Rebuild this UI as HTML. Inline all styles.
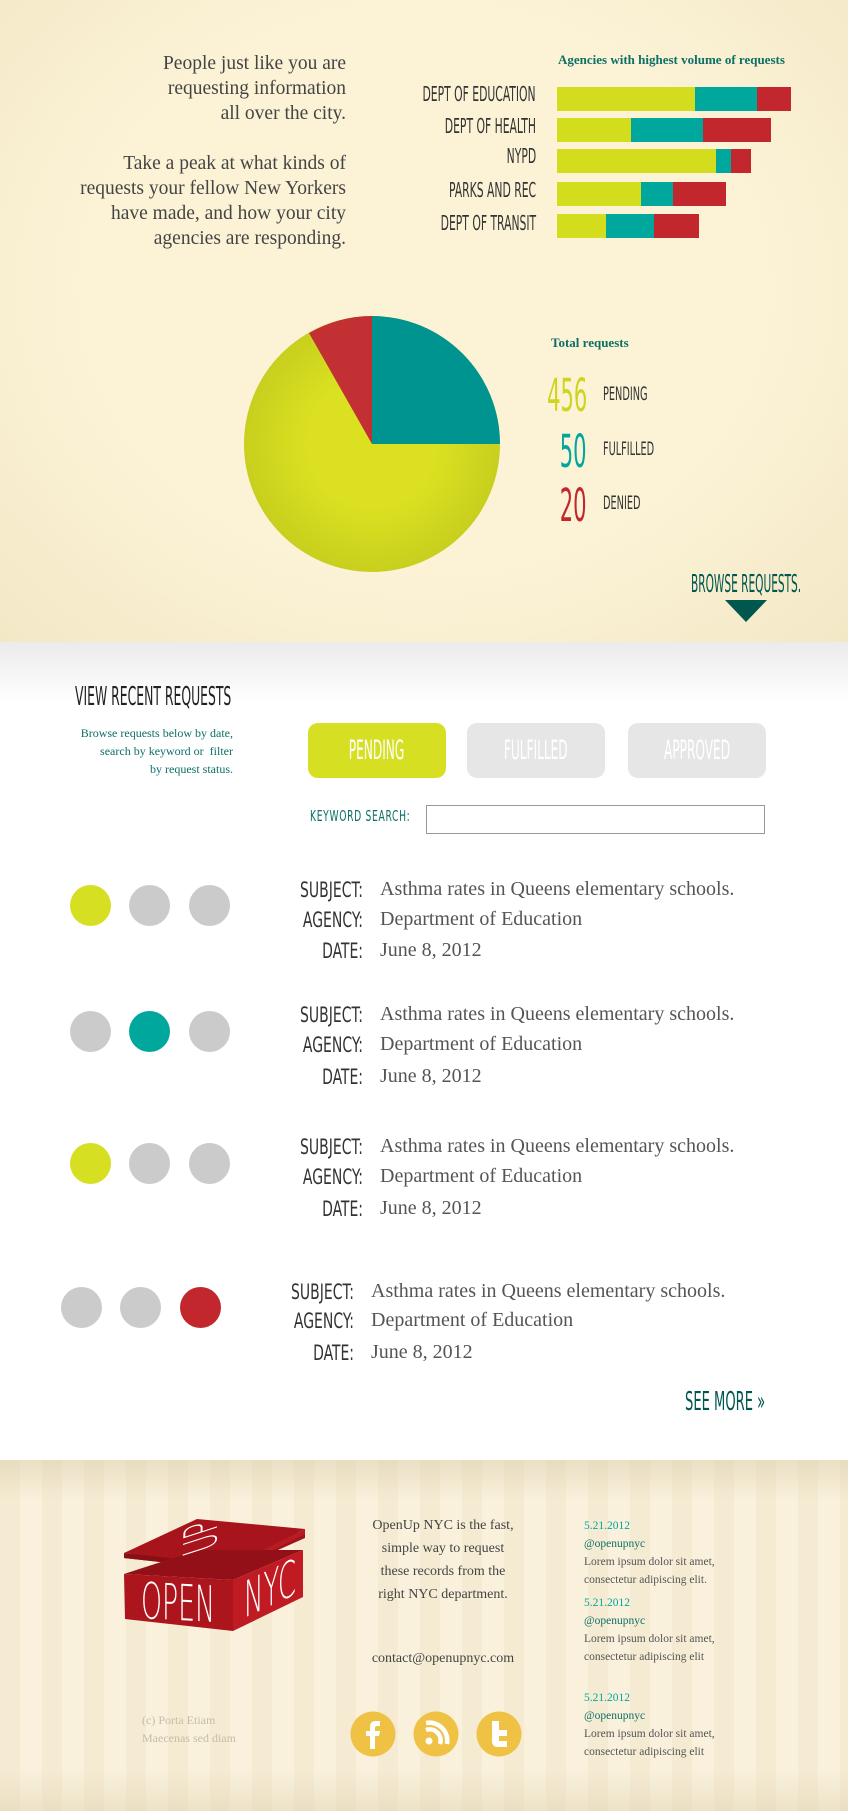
<!DOCTYPE html>
<html><head><meta charset="utf-8"><style>
*{margin:0;padding:0;box-sizing:border-box}
body{width:848px;height:1811px;position:relative;overflow:hidden;background:#fff;font-family:"Liberation Serif",serif}
.a{position:absolute;white-space:nowrap}
.top{position:absolute;left:0;top:0;width:848px;height:642px;background:radial-gradient(ellipse at 50% 45%,#fcf3d7 55%,#f3e8c6 100%)}
.mid{position:absolute;left:0;top:642px;width:848px;height:818px;background:linear-gradient(#ebebeb,#fff 60px)}
.foot{position:absolute;left:0;top:1460px;width:848px;height:351px;background:repeating-linear-gradient(90deg,#f5ebd3 0 20px,#f9f1dc 20px 42px);}
.foot:before{content:"";position:absolute;inset:0;background:linear-gradient(rgba(220,205,170,.5),rgba(0,0,0,0) 40px,rgba(0,0,0,0) 310px,rgba(220,205,170,.4))}
.n{font-family:"Liberation Sans Narrow","DejaVu Sans Condensed",sans-serif;line-height:1.16}
.bl{position:absolute;right:312px;font-size:20px;color:#333;transform:scaleX(.6);transform-origin:right center;white-space:nowrap}
.bar{position:absolute;left:557px;height:24px;display:flex}
.bar i{display:block;height:100%}
.y{background:#d4dc1e}.t{background:#00a79d}.r{background:#c1272d}
.dot{position:absolute;width:41px;height:41px;border-radius:50%;background:#cbcbcb}
.lab{position:absolute;font-family:"Liberation Sans Narrow","DejaVu Sans Condensed",sans-serif;font-size:21px;line-height:1.16;color:#333;text-align:right;width:160px;transform:scaleX(.74);transform-origin:right center;white-space:nowrap}
.val{position:absolute;font-size:20px;color:#555;white-space:nowrap}
.btn{position:absolute;top:723px;width:138px;height:55px;border-radius:10px;background:#e6e6e6;color:#fff;font-family:"Liberation Sans Narrow","DejaVu Sans Condensed",sans-serif;font-size:27px;text-align:center;line-height:55px;overflow:hidden}
.btn span{display:inline-block;transform:scaleX(.5)}
.tw{position:absolute;left:584px;font-size:11.5px;line-height:18px;color:#555}
.tw b{font-weight:normal;color:#00a79d;display:block}
.tw u{text-decoration:none;color:#0d6f66;display:block}
.num{position:absolute;right:261px;font-size:45px;line-height:1.16;transform:scaleX(.52);transform-origin:right center;font-weight:200}
.pl{position:absolute;left:603px;font-size:19px;color:#333;transform:scaleX(.57);transform-origin:left center;white-space:nowrap}
</style></head><body>
<div class="top"></div>
<div class="a" style="left:40px;top:51px;width:306px;text-align:right;font-size:19.5px;line-height:25px;color:#444">People just like you are<br>requesting information<br>all over the city.</div>
<div class="a" style="left:20px;top:151px;width:326px;text-align:right;font-size:19.5px;line-height:25px;color:#444">Take a peak at what kinds of<br>requests your fellow New Yorkers<br>have made, and how your city<br>agencies are responding.</div>
<div class="a" style="left:558px;top:52px;font-size:13px;font-weight:bold;color:#0d6f66">Agencies with highest volume of requests</div>
<div class="bl n" style="top:83px">DEPT OF EDUCATION</div>
<div class="bl n" style="top:115px">DEPT OF HEALTH</div>
<div class="bl n" style="top:145px">NYPD</div>
<div class="bl n" style="top:179px">PARKS AND REC</div>
<div class="bl n" style="top:212px">DEPT OF TRANSIT</div>
<div class="bar" style="top:87px"><i class="y" style="width:138px"></i><i class="t" style="width:62px"></i><i class="r" style="width:34px"></i></div>
<div class="bar" style="top:118px"><i class="y" style="width:74px"></i><i class="t" style="width:72px"></i><i class="r" style="width:68px"></i></div>
<div class="bar" style="top:149px"><i class="y" style="width:159px"></i><i class="t" style="width:15px"></i><i class="r" style="width:20px"></i></div>
<div class="bar" style="top:182px"><i class="y" style="width:84px"></i><i class="t" style="width:32px"></i><i class="r" style="width:53px"></i></div>
<div class="bar" style="top:214px"><i class="y" style="width:49px"></i><i class="t" style="width:48px"></i><i class="r" style="width:45px"></i></div>
<svg class="a" style="left:244px;top:315px" width="258" height="258" viewBox="0 0 258 258">
<defs><radialGradient id="g" cx="50%" cy="50%" r="50%"><stop offset="0.5" stop-color="#dbe120"/><stop offset="1" stop-color="#c8cf1e"/></radialGradient></defs>
<circle cx="128" cy="129" r="128" fill="url(#g)"/>
<path d="M128 129 L128 1 A128 128 0 0 1 256 129 Z" fill="#009490"/>
<path d="M128 129 L65 18 A128 128 0 0 1 128 1 Z" fill="#c23034"/>
</svg>
<div class="a" style="left:551px;top:335px;font-size:13px;font-weight:bold;color:#0d6f66">Total requests</div>
<div class="num n" style="top:370px;color:#cfd41e">456</div>
<div class="pl n" style="top:383px">PENDING</div>
<div class="num n" style="top:426px;color:#00a79d">50</div>
<div class="pl n" style="top:438px">FULFILLED</div>
<div class="num n" style="top:480px;color:#c1272d">20</div>
<div class="pl n" style="top:492px">DENIED</div>
<div class="a n" style="left:691px;top:569px;font-size:25px;color:#00574f;transform:scaleX(.47);transform-origin:left center">BROWSE REQUESTS.</div>
<svg class="a" style="left:725px;top:600px" width="42" height="22"><path d="M0 0H42L21 22Z" fill="#00574f"/></svg>

<div class="mid"></div>
<div class="a n" style="left:75px;top:682px;font-size:26px;color:#222;transform:scaleX(.53);transform-origin:left center">VIEW RECENT REQUESTS</div>
<div class="a" style="left:40px;top:724px;width:193px;text-align:right;font-size:12px;line-height:18px;color:#0d6f66">Browse requests below by date,<br>search by keyword or&nbsp; filter<br>by request status.</div>
<div class="btn" style="left:308px;background:#d7df23"><span>PENDING</span></div>
<div class="btn" style="left:467px"><span>FULFILLED</span></div>
<div class="btn" style="left:628px"><span>APPROVED</span></div>
<div class="a n" style="left:310px;top:808px;font-size:15px;color:#0d6f66;letter-spacing:1px;transform:scaleX(.68);transform-origin:left center">KEYWORD SEARCH:</div>
<div class="a" style="left:426px;top:805px;width:339px;height:29px;border:1px solid #999;background:#fff"></div>

<div class="dot" style="left:70px;top:885px;background:#d7df23"></div><div class="dot" style="left:129px;top:885px"></div><div class="dot" style="left:189px;top:885px"></div>
<div class="lab" style="left:203px;top:878px">SUBJECT:</div><div class="val" style="left:380px;top:878px">Asthma rates in Queens elementary schools.</div>
<div class="lab" style="left:203px;top:908px">AGENCY:</div><div class="val" style="left:380px;top:908px">Department of Education</div>
<div class="lab" style="left:203px;top:939px">DATE:</div><div class="val" style="left:380px;top:939px">June 8, 2012</div>

<div class="dot" style="left:70px;top:1011px"></div><div class="dot" style="left:129px;top:1011px;background:#00a79d"></div><div class="dot" style="left:189px;top:1011px"></div>
<div class="lab" style="left:203px;top:1003px">SUBJECT:</div><div class="val" style="left:380px;top:1003px">Asthma rates in Queens elementary schools.</div>
<div class="lab" style="left:203px;top:1033px">AGENCY:</div><div class="val" style="left:380px;top:1033px">Department of Education</div>
<div class="lab" style="left:203px;top:1065px">DATE:</div><div class="val" style="left:380px;top:1065px">June 8, 2012</div>

<div class="dot" style="left:70px;top:1143px;background:#d7df23"></div><div class="dot" style="left:129px;top:1143px"></div><div class="dot" style="left:189px;top:1143px"></div>
<div class="lab" style="left:203px;top:1135px">SUBJECT:</div><div class="val" style="left:380px;top:1135px">Asthma rates in Queens elementary schools.</div>
<div class="lab" style="left:203px;top:1165px">AGENCY:</div><div class="val" style="left:380px;top:1165px">Department of Education</div>
<div class="lab" style="left:203px;top:1197px">DATE:</div><div class="val" style="left:380px;top:1197px">June 8, 2012</div>

<div class="dot" style="left:61px;top:1287px"></div><div class="dot" style="left:120px;top:1287px"></div><div class="dot" style="left:180px;top:1287px;background:#c1272d"></div>
<div class="lab" style="left:194px;top:1280px">SUBJECT:</div><div class="val" style="left:371px;top:1280px">Asthma rates in Queens elementary schools.</div>
<div class="lab" style="left:194px;top:1309px">AGENCY:</div><div class="val" style="left:371px;top:1309px">Department of Education</div>
<div class="lab" style="left:194px;top:1341px">DATE:</div><div class="val" style="left:371px;top:1341px">June 8, 2012</div>
<div class="a n" style="left:685px;top:1387px;font-size:26px;color:#00574f;transform:scaleX(.56);transform-origin:left center">SEE MORE »</div>

<div class="foot"></div>
<svg class="a" style="left:100px;top:1500px" width="240" height="150" viewBox="0 0 240 150">
<path d="M24 57 L97 23 L205 33 L205 38 L133 70 L24 58Z" fill="#a0151c"/>
<path d="M24 53 L97 19 L205 29 L133 65Z" fill="#a8141c"/>
<path d="M24 53 L133 65 L133 70 L24 58Z" fill="#8a0f15"/>
<path d="M133 65 L205 29 L205 34 L133 70Z" fill="#b81c22"/>
<path d="M24 74 L98 50 L203 50 L133 80Z" fill="#941018"/>
<path d="M24 74 L133 80 L133 131 L25 119Z" fill="#ad151d"/>
<path d="M133 80 L203 50 L203 97 L133 131Z" fill="#c01b23"/>
<g transform="translate(41 118) skewY(3)"><text x="0" y="0" font-family="DejaVu Sans,sans-serif" font-weight="200" font-size="50" fill="#fff" textLength="74" lengthAdjust="spacingAndGlyphs">OPEN</text></g>
<g transform="translate(144 118) skewY(-25)"><text x="0" y="0" font-family="DejaVu Sans,sans-serif" font-weight="200" font-size="50" fill="#fff" textLength="52" lengthAdjust="spacingAndGlyphs">NYC</text></g>
<g transform="translate(104 36) rotate(-18) skewX(-20)"><text x="0" y="0" text-anchor="middle" dominant-baseline="middle" font-family="DejaVu Sans,sans-serif" font-weight="200" font-size="22" fill="#fff" transform="rotate(-90) scale(1 2.2)">UP</text></g>
</svg>
<div class="a" style="left:342px;top:1514px;width:202px;text-align:center;font-size:14px;line-height:23px;color:#444">OpenUp NYC is the fast,<br>simple way to request<br>these records from the<br>right NYC department.</div>
<div class="a" style="left:342px;top:1651px;width:202px;text-align:center;font-size:14px;color:#444">contact@openupnyc.com</div>
<div class="a" style="left:142px;top:1711px;font-size:12px;line-height:18px;color:#c6bda7">(c) Porta Etiam<br>Maecenas sed diam</div>
<svg class="a" style="left:350px;top:1711px" width="175" height="46">
<circle cx="23" cy="23" r="22.5" fill="#efc145"/><circle cx="86" cy="23" r="22.5" fill="#efc145"/><circle cx="149" cy="23" r="22.5" fill="#efc145"/>
<path d="M20 38V25H16V20H20V16Q20 10 26 10H30V15H27Q25 15 25 17V20H30L29 25H25V38Z" fill="#fff"/>
<circle cx="79" cy="30" r="3.5" fill="#fff"/><path d="M76 19A11 11 0 0 1 90 33M76 12A18 18 0 0 1 97 33" stroke="#fff" stroke-width="4.5" fill="none"/>
<path d="M142 10V30Q142 36 148 36H157V30H149V25H157V19H149V10Z" fill="#fff"/>
</svg>
<div class="tw" style="top:1517px"><b>5.21.2012</b><u>@openupnyc</u>Lorem ipsum dolor sit amet,<br>consectetur adipiscing elit.</div>
<div class="tw" style="top:1594px"><b>5.21.2012</b><u>@openupnyc</u>Lorem ipsum dolor sit amet,<br>consectetur adipiscing elit</div>
<div class="tw" style="top:1689px"><b>5.21.2012</b><u>@openupnyc</u>Lorem ipsum dolor sit amet,<br>consectetur adipiscing elit</div>
</body></html>
